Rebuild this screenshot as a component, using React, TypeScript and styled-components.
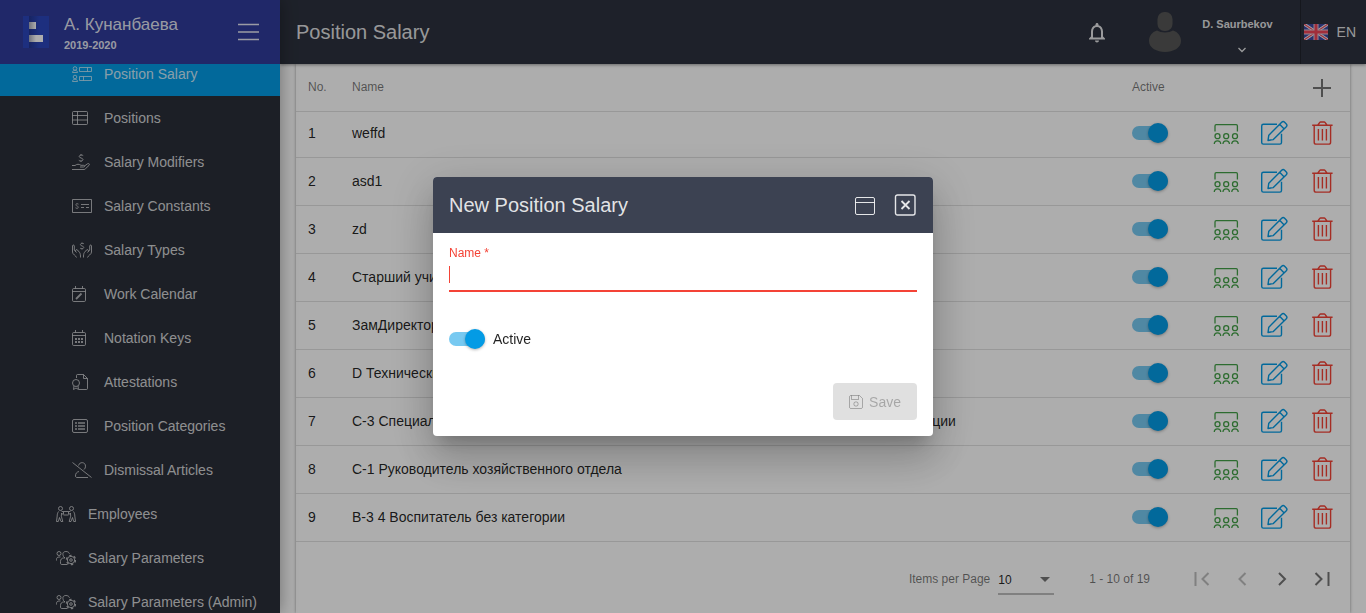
import React from 'react';
import styled, { createGlobalStyle, css } from 'styled-components';

const GlobalStyle = createGlobalStyle`
  *, *::before, *::after { box-sizing: border-box; }
  html, body, #root { height: 100%; }
  body {
    margin: 0;
    overflow: hidden;
    background: #ffffff;
    color: rgba(0, 0, 0, 0.87);
    font: 400 14px/20px "Liberation Sans", Arial, sans-serif;
  }
  button, input, select { font: inherit; color: inherit; margin: 0; }
`;

/* ---------- shared controls ---------- */

const IconButton = styled.button<{ $size?: number; $tone?: string }>`
  display: inline-flex;
  align-items: center;
  justify-content: center;
  width: ${p => p.$size ?? 40}px;
  height: ${p => p.$size ?? 40}px;
  padding: 0;
  border: 0;
  background: none;
  color: ${p => p.$tone ?? 'inherit'};
  cursor: pointer;

  &:disabled {
    color: rgba(0, 0, 0, 0.26);
    cursor: default;
  }
`;

const Switch = styled.input.attrs({ type: 'checkbox', role: 'switch' })`
  appearance: none;
  position: relative;
  display: block;
  flex: none;
  width: 36px;
  height: 14px;
  border-radius: 8px;
  background: rgba(0, 0, 0, 0.38);
  cursor: pointer;

  &::after {
    content: '';
    position: absolute;
    top: -3px;
    left: 0;
    width: 20px;
    height: 20px;
    border-radius: 50%;
    background: #fafafa;
    box-shadow: 0 1px 3px rgba(0, 0, 0, 0.3);
  }
  &:checked { background: rgba(3, 155, 229, 0.54); }
  &:checked::after { left: 16px; background: #039be5; }
`;

/* ---------- page frame ---------- */

const Shell = styled.div`
  display: flex;
  height: 100vh;
`;

const Sidebar = styled.aside`
  z-index: 2;
  display: flex;
  flex: none;
  flex-direction: column;
  width: 280px;
  background: #2a2e38;
  box-shadow: 0 0 16px rgba(0, 0, 0, 0.36);
`;

const Brand = styled.div`
  display: flex;
  flex: none;
  align-items: center;
  height: 64px;
  padding: 0 12px 0 23px;
  background: #303c9b;
  color: rgba(255, 255, 255, 0.87);
`;

const BrandText = styled.div`
  flex: 1;
  margin-left: 15px;
  padding-top: 3px;
`;

const BrandName = styled.div`
  font-size: 17px;
  line-height: 20px;
`;

const BrandYear = styled.div`
  margin-top: 2px;
  font-size: 11px;
  font-weight: 700;
  line-height: 16px;
`;

const Nav = styled.nav`
  flex: 1;
  min-height: 0;
  overflow: hidden;
`;

const NavList = styled.ul`
  margin: -12px 0 0;
  padding: 0;
  list-style: none;
`;

const NavLink = styled.a<{ $active?: boolean; $nested?: boolean }>`
  display: flex;
  align-items: center;
  height: 44px;
  padding-left: ${p => (p.$nested ? 72 : 56)}px;
  color: rgba(255, 255, 255, 0.8);
  text-decoration: none;
  white-space: nowrap;

  svg {
    flex: none;
    margin-right: 12px;
    opacity: 0.8;
  }

  ${p => p.$active && css`
    background: #039be5;
  `}
`;

const Main = styled.div`
  display: flex;
  flex: 1;
  flex-direction: column;
  min-width: 0;
`;

const Topbar = styled.header`
  z-index: 1;
  display: flex;
  flex: none;
  align-items: center;
  height: 64px;
  padding-left: 16px;
  background: #2d323e;
  color: rgba(255, 255, 255, 0.87);
  box-shadow: 0 1px 3px rgba(0, 0, 0, 0.4);
`;

const PageTitle = styled.h1`
  flex: 1;
  margin: 0;
  font-size: 20px;
  font-weight: 400;
  line-height: 24px;
`;

const UserButton = styled.button`
  display: flex;
  align-items: center;
  height: 64px;
  margin-left: 31px;
  padding: 0 27px 0 0;
  border: 0;
  background: none;
  cursor: pointer;
`;

const UserName = styled.span`
  display: flex;
  flex-direction: column;
  align-items: center;
  gap: 15px;
  margin-left: 20px;
  padding-top: 5px;
  font-size: 11px;
  font-weight: 700;
  line-height: 16px;
`;

const LanguageButton = styled.button`
  display: flex;
  align-items: center;
  gap: 9px;
  height: 64px;
  padding: 0 10px 0 3px;
  border: 0;
  border-left: 1px solid rgba(0, 0, 0, 0.3);
  background: none;
  cursor: pointer;
`;

const Content = styled.main`
  display: flex;
  flex: 1;
  min-height: 0;
  padding: 0 16px;
`;

const Card = styled.section`
  flex: 1;
  min-width: 0;
  background: #ffffff;
  box-shadow: 0 0 3px rgba(0, 0, 0, 0.4);
`;

/* ---------- table ---------- */

const Table = styled.table`
  width: 100%;
  border-collapse: separate;
  border-spacing: 0;
  table-layout: fixed;
`;

const Col = styled.col<{ $width?: number }>`
  width: ${p => (p.$width ? `${p.$width}px` : 'auto')};
`;

const HeadCell = styled.th`
  height: 48px;
  padding: 0 0 2px;
  border-bottom: 1px solid #e0e0e0;
  color: rgba(0, 0, 0, 0.54);
  font-size: 12px;
  font-weight: 400;
  text-align: left;

  &:first-child { padding-left: 12px; }
  &:last-child { padding: 0 4px 0 0; }
  & > button { display: flex; width: 48px; height: 46px; }
`;

const Cell = styled.td`
  height: 48px;
  padding: 0 0 2px;
  border-bottom: 1px solid #e0e0e0;
  white-space: nowrap;

  &:first-child { padding-left: 12px; }
  & > button { display: flex; width: 48px; height: 40px; }

  tr:first-child > & {
    height: 46px;
    padding-bottom: 4px;
  }
`;

const Paginator = styled.footer`
  display: flex;
  align-items: center;
  justify-content: flex-end;
  padding: 17px 8px 16px 0;
  color: rgba(0, 0, 0, 0.54);
  font-size: 12px;
`;

const PageSize = styled.label`
  display: flex;
  align-items: center;
  gap: 8px;
`;

const SelectBox = styled.span`
  position: relative;
  display: block;

  svg {
    position: absolute;
    top: 14px;
    right: 4px;
    pointer-events: none;
  }
`;

const PageSelect = styled.select`
  display: block;
  appearance: none;
  width: 56px;
  height: 32px;
  padding: 4px 0 0;
  border: 0;
  border-bottom: 2px solid rgba(0, 0, 0, 0.26);
  border-radius: 0;
  background: none;
  color: rgba(0, 0, 0, 0.87);
`;

const Range = styled.span`
  margin: 0 32px 0 35px;
`;

/* ---------- dialog ---------- */

const Backdrop = styled.div`
  position: fixed;
  inset: 0;
  z-index: 10;
  display: grid;
  place-items: center;
  background: rgba(0, 0, 0, 0.32);
`;

const Dialog = styled.section`
  width: 500px;
  max-width: 80vw;
  overflow: hidden;
  border-radius: 4px;
  background: #ffffff;
  box-shadow:
    0 11px 15px -7px rgba(0, 0, 0, 0.2),
    0 24px 38px 3px rgba(0, 0, 0, 0.14),
    0 9px 46px 8px rgba(0, 0, 0, 0.12);
`;

const DialogBar = styled.header`
  display: flex;
  align-items: center;
  height: 56px;
  padding: 0 8px 0 16px;
  background: #3c4252;
  color: rgba(255, 255, 255, 0.87);
`;

const DialogTitle = styled.h2`
  flex: 1;
  margin: 0;
  font-size: 20px;
  font-weight: 400;
  line-height: 24px;
`;

const DialogForm = styled.form`
  padding: 12px 16px 16px;
`;

const FieldLabel = styled.label`
  display: block;
  color: #f44336;
  font-size: 12px;
  line-height: 16px;
`;

const Field = styled.div`
  position: relative;
  border-bottom: 2px solid #f44336;

  &::before {
    content: '';
    position: absolute;
    top: 5px;
    left: 0;
    width: 1px;
    height: 17px;
    background: #f44336;
  }
`;

const TextInput = styled.input`
  display: block;
  width: 100%;
  height: 29px;
  padding: 0;
  border: 0;
  outline: 0;
  background: none;
  caret-color: #f44336;
`;

const SwitchLabel = styled.label`
  display: flex;
  align-items: center;
  gap: 8px;
  margin-top: 37px;
`;

const Actions = styled.div`
  display: flex;
  justify-content: flex-end;
  margin-top: 34px;
`;

const SaveButton = styled.button`
  display: flex;
  align-items: center;
  gap: 6px;
  height: 37px;
  padding: 0 16px;
  border: 0;
  border-radius: 4px;
  background: #e0e0e0;

  &:disabled { color: rgba(0, 0, 0, 0.26); }
`;

/* ---------- icons ---------- */

type DrawProps = { w: number; h: number; sw?: number; children: React.ReactNode };

const Draw = ({ w, h, sw = 1, children }: DrawProps) => (
  <svg width={w} height={h} viewBox={`0 0 ${w} ${h}`} fill="none" stroke="currentColor" strokeWidth={sw} aria-hidden="true">
    {children}
  </svg>
);

const dollar = 'M2.2 -2.4C1.6 -3.1 -1.8 -3.3 -1.8 -1.5C-1.8 .2 2 -.2 2 1.6C2 3.4 -1.6 3.2 -2.2 2.3M0 -4V-3M0 3V4';

const icons: Record<string, React.ReactNode> = {
  salary: (
    <Draw w={20} h={16}>
      <circle cx="3" cy="2.5" r="1.8" /><path d="M.5 6.500c0-3 5-3 5 0z" />
      <circle cx="3" cy="11" r="1.8" /><path d="M.5 15.500c0-3 5-3 5 0z" />
      <path d="M7.500 1.500h12v4h-12zM15.500 1.500v4M7.500 10.500h12v4h-12zM11.500 10.500v4" />
    </Draw>
  ),
  table: (
    <Draw w={20} h={16}>
      <rect x=".5" y="1.500" width="15" height="13" rx="1" />
      <path d="M.5 5.500h15M.5 10h15M5.500 1.500v13" />
    </Draw>
  ),
  hand: (
    <Draw w={20} h={16}>
      <path d={dollar} transform="translate(9 4)" />
      <path d="M0 11.500h3c2-1.600 4-1.600 6-.2h2.500c1.500 0 1.500 1.700 0 1.700H8M12.500 12l3-2.200c1.500-.8 2.500.6 1.500 1.600l-3.500 3.300c-.4.500-.8.800-1.500.8H0" />
    </Draw>
  ),
  bill: (
    <Draw w={20} h={16}>
      <path d="M.5 1.500h19v13H.5z" />
      <path d={dollar} transform="translate(5 8) scale(.75)" />
      <path d="M9 6.500h8M9 9.500h3M14 9.500h3" />
    </Draw>
  ),
  hands: (
    <Draw w={20} h={16}>
      <path d={dollar} transform="translate(10 4) scale(.9)" />
      <path d="M4.500 15.500c-.5-2-4-3-4-5.500V4c0-1.300 1.800-1.300 1.800 0v4l2.200 2.500M3.600 9.300c-.4-1.600 1-2.200 2-1.200l2 2.400c.8 1 .9 3 .9 5M15.500 15.500c.5-2 4-3 4-5.500V4c0-1.300-1.800-1.300-1.800 0v4l-2.200 2.500M16.400 9.300c.4-1.600-1-2.200-2-1.200l-2 2.400c-.8 1-.9 3-.9 5" />
    </Draw>
  ),
  calendarEdit: (
    <Draw w={20} h={16}>
      <rect x=".5" y="2.500" width="13" height="13" rx="1.200" />
      <path d="M.5 5.500h13M3.500 0v2.500M10.500 0v2.500" />
      <path d="M4 13l5.500-5.500" strokeWidth="1.800" />
    </Draw>
  ),
  calendar: (
    <Draw w={20} h={16}>
      <rect x=".5" y="2.500" width="13" height="13" rx="1.200" />
      <path d="M.5 5.500h13M3.500 0v2.500M10.500 0v2.500" />
      <path d="M3 9h2M6 9h2M9 9h2M3 12h2M6 12h2M9 12h2" strokeWidth="2" />
    </Draw>
  ),
  certificate: (
    <Draw w={20} h={16}>
      <path d="M4.500 4V1.500c0-.6.4-1 1-1h6l4 4v10c0 .6-.4 1-1 1H7M11.500.5v4h4" />
      <circle cx="4" cy="9" r="3.500" />
      <path d="M2 12l-.5 3.500L4 14l2.500 1.500L6 12" />
    </Draw>
  ),
  list: (
    <Draw w={20} h={16}>
      <rect x=".5" y="1.500" width="15" height="13" rx="1.500" />
      <path d="M3 5h2M3 8h2M3 11h2M6 5h7M6 8h7M6 11h7" strokeWidth="1.600" />
    </Draw>
  ),
  userSlash: (
    <Draw w={20} h={16}>
      <path d="M.5.5l19 15M6.500 3.500c1-4 7-3.800 7 .7 0 1.500-.5 2.500-1.500 3.300M7 9.500c-2.500.6-3.500 2-3.500 4.500 0 .8.500 1.500 1.300 1.500H16" />
    </Draw>
  ),
  people: (
    <Draw w={20} h={16}>
      <circle cx="4.500" cy="2.500" r="2" /><circle cx="15.500" cy="2.500" r="2" />
      <path d="M2.500 5.500c-1 1.500-1.300 3-1.300 4.500L.5 15.500h1.800l1.200-4 1.500 4h1.800l-1.500-5.300.3-3.200 1.900 2h5l1.900-2 .3 3.200-1.500 5.300H15l1.500-4 1.200 4h1.800l-.7-5.500c0-1.500-.3-3-1.300-4.500M5.600 5.500h1.900v2.500M14.400 5.500h-1.900v2.500M7.500 5.500h5" />
    </Draw>
  ),
  peopleCog: (
    <Draw w={20} h={16}>
      <circle cx="3" cy="3.500" r="2" />
      <path d="M.5 10.500v-1c0-1.600 1-2.500 2.500-2.500h1.500M7.500 6.500C6 3 7.500 1.500 10 1.500c1.800 0 3 .8 3.500 2.300M7.500 6.500L9 8H7.500c-2 0-3 1.500-3 3.500v1.800c0 .7.500 1.200 1.200 1.200h5.800" />
      <circle cx="15" cy="10" r="3.700" />
      <circle cx="15" cy="10" r="4.600" strokeWidth="1.300" strokeDasharray="2.408 2.408" />
      <circle cx="15" cy="10" r="1.300" />
    </Draw>
  ),
};

const Logo = () => (
  <svg width="26" height="32" viewBox="0 0 26 32" aria-hidden="true">
    <defs>
      <linearGradient id="logoFold" x1="0" x2="1"><stop offset="0" stopColor="#223590" /><stop offset="1" stopColor="#2b46bb" /></linearGradient>
      <linearGradient id="logoWhite" x1="0" x2="1"><stop offset="0" stopColor="#a5a9b8" /><stop offset=".5" stopColor="#ffffff" /></linearGradient>
    </defs>
    <path d="M0 0h26v32H0z" fill="#2b46bb" />
    <path d="M6 0h10v32H6z" fill="url(#logoFold)" />
    <path d="M6 6h7v7H6zM6 19h14v7H6z" fill="url(#logoWhite)" />
  </svg>
);

const Flag = () => (
  <svg width="24" height="16" viewBox="0 0 24 16" aria-hidden="true">
    <path d="M0 0h24v16H0z" fill="#3c48a0" />
    <path d="M0 0l24 16M24 0L0 16" stroke="#f4f4f8" strokeWidth="3" />
    <path d="M0 0l24 16M24 0L0 16" stroke="#e8485a" strokeWidth="1.200" />
    <path d="M12 0v16M0 8h24" stroke="#e0c8d8" strokeWidth="5" />
    <path d="M12 0v16M0 8h24" stroke="#ee4558" strokeWidth="3" />
  </svg>
);

const StaffIcon = () => (
  <Draw w={26} h={24} sw={1.3}>
    <path d="M2 10.500V5c0-.8.400-1.300 1.200-1.300h20c.8 0 1.200.5 1.200 1.300v5.500" />
    <circle cx="4.500" cy="15.200" r="2.500" /><circle cx="13.200" cy="15.200" r="2.500" /><circle cx="22" cy="15.200" r="2.500" />
    <path d="M1.300 23c0-4.300 6.400-4.300 6.400 0M10 23c0-4.300 6.400-4.300 6.400 0M18.800 23c0-4.300 6.400-4.300 6.400 0" />
  </Draw>
);

const EditIcon = () => (
  <Draw w={28} h={26} sw={1.4}>
    <path d="M17 4.200H3.400c-1 0-1.700.7-1.700 1.700v16.500c0 1 .7 1.700 1.700 1.700h16.400c1 0 1.700-.7 1.700-1.700v-8.600" />
    <path d="M8 20.500l.8-5.300L21.700 2.200c.9-.9 2-.9 2.900 0l1.700 1.700c.8.800.8 1.900 0 2.800L13.300 19.600zM19.600 4.300l4.600 4.600" strokeLinejoin="round" />
  </Draw>
);

const TrashIcon = () => (
  <Draw w={22} h={26} sw={1.4}>
    <path d="M1.200 5.200h20.400M3.200 5.200v17c0 1.100.8 1.900 1.900 1.900h12.600c1.100 0 1.900-.8 1.900-1.900v-17M6.900 5l1.700-2.400c.3-.4.600-.6 1-.6h3.600c.4 0 .7.200 1 .6L15.900 5M7.400 9v11.500M11.400 9v11.500M15.400 9v11.500" />
  </Draw>
);

/* ---------- data ---------- */

const navItems = [
  { icon: 'salary', label: 'Position Salary', nested: true, active: true },
  { icon: 'table', label: 'Positions', nested: true },
  { icon: 'hand', label: 'Salary Modifiers', nested: true },
  { icon: 'bill', label: 'Salary Constants', nested: true },
  { icon: 'hands', label: 'Salary Types', nested: true },
  { icon: 'calendarEdit', label: 'Work Calendar', nested: true },
  { icon: 'calendar', label: 'Notation Keys', nested: true },
  { icon: 'certificate', label: 'Attestations', nested: true },
  { icon: 'list', label: 'Position Categories', nested: true },
  { icon: 'userSlash', label: 'Dismissal Articles', nested: true },
  { icon: 'people', label: 'Employees' },
  { icon: 'peopleCog', label: 'Salary Parameters' },
  { icon: 'peopleCog', label: 'Salary Parameters (Admin)' },
];

const rows = [
  'weffd',
  'asd1',
  'zd',
  'Старший учитель',
  'ЗамДиректора',
  'D Технический персонал',
  'C-3 Специалист высшего уровня квалификации без категории технической службы и секции',
  'C-1 Руководитель хозяйственного отдела',
  'B-3 4 Воспитатель без категории',
];

/* ---------- sections ---------- */

const SideMenu = () => (
  <Sidebar>
    <Brand>
      <Logo />
      <BrandText>
        <BrandName>А. Кунанбаева</BrandName>
        <BrandYear>2019-2020</BrandYear>
      </BrandText>
      <IconButton aria-label="Toggle menu">
        <Draw w={22} h={18} sw={1.4}><path d="M1 1.500h21M1 9h21M1 16.500h21" /></Draw>
      </IconButton>
    </Brand>
    <Nav>
      <NavList>
        {navItems.map(item => (
          <li key={item.label}>
            <NavLink href="#" $active={item.active} $nested={item.nested}>
              {icons[item.icon]}
              {item.label}
            </NavLink>
          </li>
        ))}
      </NavList>
    </Nav>
  </Sidebar>
);

const Header = () => (
  <Topbar>
    <PageTitle>Position Salary</PageTitle>
    <IconButton aria-label="Notifications">
      <svg width="24" height="24" viewBox="0 0 24 24" fill="currentColor" aria-hidden="true">
        <path d="M12 22.500c1.100 0 2-.9 2-2h-4c0 1.100.9 2 2 2zm6-6v-5c0-3.070-1.630-5.640-4.500-6.320V4.500c0-.83-.67-1.500-1.500-1.500s-1.500.67-1.500 1.500v.68C7.640 5.860 6 8.420 6 11.500v5l-2 2v1h16v-1l-2-2zm-2 1H8v-6c0-2.480 1.510-4.500 4-4.500s4 2.020 4 4.500v6z" />
      </svg>
    </IconButton>
    <UserButton>
      <svg width="34" height="40" viewBox="0 0 34 40" fill="#565656" aria-hidden="true">
        <rect x="9.500" y="0" width="15" height="19" rx="7" />
        <path d="M9 18.500c4 2.500 12 2.500 16 0 5 1.500 8 5.500 8 10.500 0 7-8 11-16 11S1 36 1 29c0-5 3-9 8-10.500z" />
      </svg>
      <UserName>
        <span>D. Saurbekov</span>
        <Draw w={24} h={6} sw={1.3}><path d="M13.500 1l3.500 3.500L20.500 1" /></Draw>
      </UserName>
    </UserButton>
    <LanguageButton>
      <Flag />
      EN
    </LanguageButton>
  </Topbar>
);

const PositionTable = () => (
  <Table>
    <colgroup>
      <Col $width={56} />
      <Col />
      <Col $width={70} />
      <Col $width={48} />
      <Col $width={48} />
      <Col $width={52} />
    </colgroup>
    <thead>
      <tr>
        <HeadCell>No.</HeadCell>
        <HeadCell>Name</HeadCell>
        <HeadCell>Active</HeadCell>
        <HeadCell colSpan={2} />
        <HeadCell>
          <IconButton aria-label="Add position salary">
            <Draw w={18} h={18} sw={2}><path d="M9 0v18M0 9h18" /></Draw>
          </IconButton>
        </HeadCell>
      </tr>
    </thead>
    <tbody>
      {rows.map((name, i) => (
        <tr key={name}>
          <Cell>{i + 1}</Cell>
          <Cell>{name}</Cell>
          <Cell><Switch defaultChecked aria-label={`Active: ${name}`} /></Cell>
          <Cell><IconButton $tone="#43a047" aria-label="Staff"><StaffIcon /></IconButton></Cell>
          <Cell><IconButton $tone="#039be5" aria-label="Edit"><EditIcon /></IconButton></Cell>
          <Cell><IconButton $tone="#f44336" aria-label="Delete"><TrashIcon /></IconButton></Cell>
        </tr>
      ))}
    </tbody>
  </Table>
);

const Pages = () => (
  <Paginator>
    <PageSize>
      Items per Page
      <SelectBox>
        <PageSelect defaultValue="10">
          <option>10</option>
          <option>25</option>
        </PageSelect>
        <svg width="10" height="5" viewBox="0 0 10 5" fill="currentColor" aria-hidden="true"><path d="M0 0h10L5 5z" /></svg>
      </SelectBox>
    </PageSize>
    <Range>1 - 10 of 19</Range>
    <IconButton disabled aria-label="First page"><Draw w={16} h={14} sw={2}><path d="M1.500 0v14M14.500 1l-6 6 6 6" /></Draw></IconButton>
    <IconButton disabled aria-label="Previous page"><Draw w={16} h={14} sw={2}><path d="M11.500 1l-6 6 6 6" /></Draw></IconButton>
    <IconButton aria-label="Next page"><Draw w={16} h={14} sw={2}><path d="M5 1l6 6-6 6" /></Draw></IconButton>
    <IconButton aria-label="Last page"><Draw w={16} h={14} sw={2}><path d="M14.500 0v14M1.500 1l6 6-6 6" /></Draw></IconButton>
  </Paginator>
);

const NewSalaryDialog = () => (
  <Backdrop>
    <Dialog role="dialog" aria-modal="true" aria-labelledby="dialog-title">
      <DialogBar>
        <DialogTitle id="dialog-title">New Position Salary</DialogTitle>
        <IconButton aria-label="Maximize">
          <Draw w={20} h={20} sw={1}><rect x=".5" y="2.500" width="19" height="17" rx="1.500" /><path d="M.5 7.500h19" /></Draw>
        </IconButton>
        <IconButton aria-label="Close">
          <Draw w={22} h={22} sw={1.4}><rect x="1.500" y="1" width="19.500" height="20" rx="2" /><path d="M7.500 7l8 8M15.500 7l-8 8" strokeWidth="1.800" /></Draw>
        </IconButton>
      </DialogBar>
      <DialogForm>
        <FieldLabel htmlFor="salary-name">Name *</FieldLabel>
        <Field><TextInput id="salary-name" type="text" required /></Field>
        <SwitchLabel>
          <Switch defaultChecked />
          Active
        </SwitchLabel>
        <Actions>
          <SaveButton type="submit" disabled>
            <Draw w={14} h={14}>
              <path d="M.5 2c0-.9.600-1.500 1.500-1.500h8.500l3 3V12c0 .9-.6 1.500-1.500 1.500H2c-.9 0-1.500-.6-1.500-1.500zM2.500.5v4h7v-4" />
              <circle cx="7" cy="9" r="2.200" />
            </Draw>
            Save
          </SaveButton>
        </Actions>
      </DialogForm>
    </Dialog>
  </Backdrop>
);

export default function App() {
  return (
    <>
      <GlobalStyle />
      <Shell>
        <SideMenu />
        <Main>
          <Header />
          <Content>
            <Card>
              <PositionTable />
              <Pages />
            </Card>
          </Content>
        </Main>
      </Shell>
      <NewSalaryDialog />
    </>
  );
}
